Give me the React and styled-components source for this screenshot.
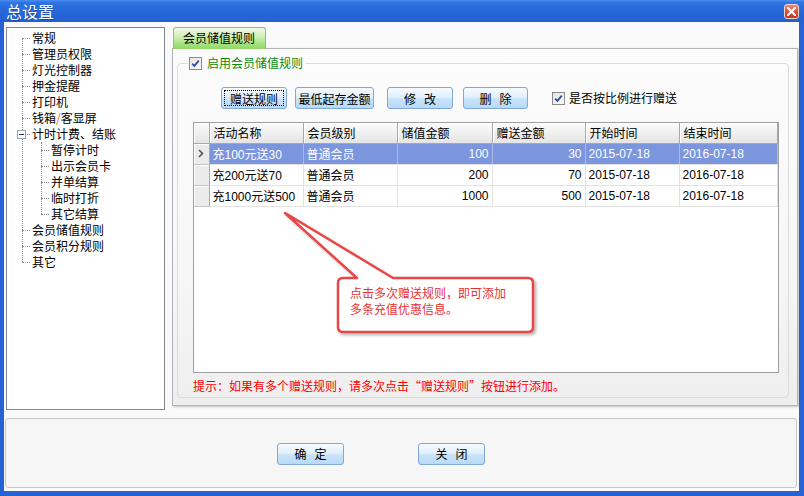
import React from 'react';
import styled, { createGlobalStyle } from 'styled-components';

const GlobalStyle = createGlobalStyle`
  html, body { margin: 0; padding: 0; }
  body {
    width: 804px; height: 496px; overflow: hidden; background: #fff;
    font-family: "Noto Sans CJK SC", "Liberation Sans", sans-serif;
    font-size: 12px; color: #000;
  }
`;

const Frame = styled.div`
  width: 804px; height: 496px;
  display: flex; flex-direction: column;
`;

const TitleBar = styled.div`
  height: 22px; flex: none;
  display: flex; align-items: center; justify-content: space-between;
  padding: 0 5px 0 6px; box-sizing: border-box;
  background: linear-gradient(#4b8ff2 0%, #2e73e2 12%, #2566d8 60%, #225fd2 100%);
`;

const Title = styled.div`
  color: #fff; font-size: 16px; line-height: 20px;
  text-shadow: 1px 1px 0 rgba(0, 0, 0, 0.25);
`;

const CloseBtn = styled.div`
  width: 15px; height: 15px; box-sizing: border-box;
  border: 1px solid #f4d4cc; border-radius: 3px;
  background: linear-gradient(#f08a74, #d8482e 60%, #c43a22);
  display: flex; align-items: center; justify-content: center;
`;

const Client = styled.div`
  flex: 1; display: flex; flex-direction: column; gap: 8px;
  padding: 5px 2px 3px 2px;
  border-style: solid; border-color: #2462d6;
  border-width: 0 5px 5px 4px;
  background: #fafafa;
`;

const Main = styled.div`
  height: 383px; display: flex; gap: 7px;
`;

const Tree = styled.div`
  width: 159px; flex: none; box-sizing: border-box;
  border: 1px solid #828790; background: #fff;
  padding-top: 2px;
`;

const TreeList = styled.ul`
  list-style: none; margin: 0; padding: 0; position: relative;
  &::before {
    content: ''; position: absolute;
    left: ${p => p.$line}px; top: ${p => p.$top}px; bottom: 8px;
    border-left: 1px dotted #8a8a8a;
  }
`;

const Row = styled.div`
  position: relative; height: 16px; line-height: 16px;
  padding-left: ${p => p.$pad}px; white-space: nowrap;
  &::before {
    content: ''; position: absolute;
    left: ${p => p.$line}px; top: 8px; width: 8px;
    border-top: 1px dotted #8a8a8a;
  }
`;

const Expander = styled.span`
  position: absolute; left: 10px; top: 4px;
  width: 9px; height: 9px; box-sizing: border-box;
  border: 1px solid #98a6b8; background: #fff; z-index: 1;
  &::after {
    content: ''; position: absolute; left: 1px; top: 3px; width: 5px;
    border-top: 1px solid #203050;
  }
`;

const Slash = styled.span`
  color: #d06a10;
`;

const TabArea = styled.div`
  flex: 1; display: flex; flex-direction: column;
`;

const TabStrip = styled.div`
  height: 21px; flex: none; padding-left: 1px; display: flex;
  position: relative; z-index: 1;
`;

const Tab = styled.div`
  width: 93px; height: 22px; box-sizing: border-box;
  border: 1px solid #98b88a; border-bottom: none; border-radius: 3px 3px 0 0;
  background: linear-gradient(#f2fbe9 0%, #d0f0b8 40%, #a2e07a 80%, #92d868 100%);
  padding-left: 9px; line-height: 20px;
`;

const TabPanel = styled.div`
  flex: 1; margin-bottom: 4px; box-sizing: border-box;
  border: 1px solid #b4b4b4;
  box-shadow: 1px 1px 2px rgba(0, 0, 0, 0.22);
  background: linear-gradient(#fcfcfc, #f7f7f7 60%, #eeeeee);
  padding: 6px 8px 7px 4px;
  display: flex; flex-direction: column;
`;

const Group = styled.fieldset`
  flex: 1; margin: 0; min-width: 0;
  border: 1px solid #d8dce0; border-radius: 4px;
  padding: 0 9px 0 15px;
  display: flex; flex-direction: column;
`;

const Legend = styled.legend`
  margin-left: -5px; padding: 0 3px 0 1px;
  height: 16px; line-height: 16px;
  display: flex; align-items: center; gap: 5px;
  color: #0c8a0c;
`;

const Check = styled.span`
  width: 13px; height: 13px; box-sizing: border-box; flex: none;
  border: 1px solid #8c8c8c;
  background: linear-gradient(135deg, #e4e4e0, #fafafa);
  display: inline-flex; align-items: center; justify-content: center;
`;

const ButtonRow = styled.div`
  margin: 16px 0 0 28px; height: 22px;
  display: flex; align-items: center;
`;

const Btn = styled.button`
  width: ${p => p.$w}px; height: 22px; flex: none;
  margin-right: ${p => p.$gap || 0}px;
  box-sizing: border-box; padding: 0;
  border: 1px solid #80a8d8; border-radius: 3px;
  background: linear-gradient(#f6fbff 0%, #e2f0fc 45%, #c8e3f9 55%, #b8daf7 100%);
  font: 12px "Noto Sans CJK SC", "Liberation Sans", sans-serif; color: #000;
  letter-spacing: ${p => (p.$spaced ? '8px' : '0')};
  text-indent: ${p => (p.$spaced ? '8px' : '0')};
  outline: ${p => (p.$focus ? '1px dotted #000' : 'none')};
  outline-offset: -4px;
`;

const RatioCheck = styled.label`
  display: flex; align-items: center; gap: 4px; line-height: 16px;
`;

const TableWrap = styled.div`
  position: relative; margin-top: 13px; height: 251px; box-sizing: border-box;
  border: 1px solid #a0a0a0; background: #fff;
`;

const Grid = styled.table`
  border-collapse: collapse; table-layout: fixed; width: 583px;
  font-family: "Liberation Sans", "Noto Sans CJK SC", sans-serif; font-size: 12px;
`;

const Th = styled.th`
  height: 20px; padding: 0 0 0 4px; box-sizing: border-box;
  font-weight: normal; text-align: left; white-space: nowrap;
  font-family: "Noto Sans CJK SC", sans-serif;
  background: linear-gradient(#fbfbfb, #f0f0f0 50%, #e4e4e4);
  border-right: 1px solid #a8a8a8; border-bottom: 1px solid #a8a8a8;
  box-shadow: inset 1px 1px 0 #fff;
`;

const Td = styled.td`
  height: 21px; padding: 0 3px; box-sizing: border-box;
  white-space: nowrap; overflow: hidden;
  text-align: ${p => (p.$num ? 'right' : 'left')};
  border-right: 1px solid ${p => (p.$sel ? '#a8bbe8' : '#e2e2e2')};
  border-bottom: 1px solid #e2e2e2;
  background: ${p => (p.$sel ? '#7b96dd' : '#fff')};
  color: ${p => (p.$sel ? '#fff' : '#000')};
`;

const RowHead = styled.td`
  height: 21px; padding: 0; box-sizing: border-box;
  background: #ebebeb;
  border-right: 1px solid #a8a8a8; border-bottom: 1px solid #c4c4c4;
  box-shadow: inset 1px 1px 0 #fff;
  text-align: center; vertical-align: middle;
`;

const CalloutShape = styled.svg`
  position: absolute; left: 89px; top: 88px; overflow: visible;
`;

const CalloutText = styled.div`
  position: absolute; left: 156px; top: 162px; width: 180px;
  line-height: 16px; color: #e63232;
`;

const Hint = styled.div`
  margin-top: 5px; line-height: 16px; color: #ff0000;
  font-family: "Noto Sans CJK SC", sans-serif;
`;

const Footer = styled.div`
  height: 70px; flex: none; box-sizing: border-box; margin-left: -1px;
  border: 1px solid #c8c8c8; border-radius: 3px; background: #f6f6f6;
  display: flex; align-items: center; gap: 74px;
  padding: 1px 0 0 271px;
`;

const tree = ['常规', '管理员权限', '灯光控制器', '押金提醒', '打印机'];
const subTree = ['暂停计时', '出示会员卡', '并单结算', '临时打折', '其它结算'];
const tail = ['会员储值规则', '会员积分规则', '其它'];

const rows = [
  ['充100元送30', '普通会员', '100', '30', '2015-07-18', '2016-07-18'],
  ['充200元送70', '普通会员', '200', '70', '2015-07-18', '2016-07-18'],
  ['充1000元送500', '普通会员', '1000', '500', '2015-07-18', '2016-07-18'],
];

const CheckMark = () => (
  <svg width="9" height="9" viewBox="0 0 9 9">
    <path d="M1.2 4.6 L3.4 6.8 L7.8 1.6" fill="none" stroke="#2d4f9e" strokeWidth="1.8" />
  </svg>
);

export default function App() {
  return (
    <Frame>
      <GlobalStyle />
      <TitleBar>
        <Title>总设置</Title>
        <CloseBtn>
          <svg width="9" height="9" viewBox="0 0 9 9">
            <path d="M1 1 L8 8 M8 1 L1 8" stroke="#fff" strokeWidth="2.2" strokeLinecap="square" />
          </svg>
        </CloseBtn>
      </TitleBar>
      <Client>
        <Main>
          <Tree>
            <TreeList $line={15} $top={8}>
              {tree.map(t => (
                <li key={t}><Row $pad={25} $line={15}>{t}</Row></li>
              ))}
              <li><Row $pad={25} $line={15}>钱箱<Slash>/</Slash>客显屏</Row></li>
              <li>
                <Row $pad={25} $line={15}><Expander />计时计费、结账</Row>
                <TreeList $line={34} $top={0}>
                  {subTree.map(t => (
                    <li key={t}><Row $pad={44} $line={34}>{t}</Row></li>
                  ))}
                </TreeList>
              </li>
              {tail.map(t => (
                <li key={t}><Row $pad={25} $line={15}>{t}</Row></li>
              ))}
            </TreeList>
          </Tree>
          <TabArea>
            <TabStrip><Tab>会员储值规则</Tab></TabStrip>
            <TabPanel>
              <Group>
                <Legend><Check><CheckMark /></Check>启用会员储值规则</Legend>
                <ButtonRow>
                  <Btn $w={66} $gap={8} $focus>赠送规则</Btn>
                  <Btn $w={79} $gap={13}>最低起存金额</Btn>
                  <Btn $w={66} $gap={10} $spaced>修改</Btn>
                  <Btn $w={65} $gap={24} $spaced>删除</Btn>
                  <RatioCheck><Check><CheckMark /></Check>是否按比例进行赠送</RatioCheck>
                </ButtonRow>
                <TableWrap>
                  <Grid>
                    <colgroup>
                      <col style={{ width: 15 }} />
                      <col style={{ width: 94 }} />
                      <col style={{ width: 94 }} />
                      <col style={{ width: 95 }} />
                      <col style={{ width: 93 }} />
                      <col style={{ width: 94 }} />
                      <col style={{ width: 98 }} />
                    </colgroup>
                    <thead>
                      <tr>
                        <Th />
                        <Th>活动名称</Th>
                        <Th>会员级别</Th>
                        <Th>储值金额</Th>
                        <Th>赠送金额</Th>
                        <Th>开始时间</Th>
                        <Th>结束时间</Th>
                      </tr>
                    </thead>
                    <tbody>
                      {rows.map((r, i) => {
                        const sel = i === 0;
                        return (
                          <tr key={r[0]}>
                            <RowHead>
                              {sel && (
                                <svg width="6" height="9" viewBox="0 0 6 9">
                                  <path d="M1 1 L4.5 4.5 L1 8" fill="none" stroke="#555" strokeWidth="1.6" />
                                </svg>
                              )}
                            </RowHead>
                            <Td $sel={sel}>{r[0]}</Td>
                            <Td $sel={sel}>{r[1]}</Td>
                            <Td $sel={sel} $num>{r[2]}</Td>
                            <Td $sel={sel} $num>{r[3]}</Td>
                            <Td $sel={sel}>{r[4]}</Td>
                            <Td $sel={sel}>{r[5]}</Td>
                          </tr>
                        );
                      })}
                    </tbody>
                  </Grid>
                  <CalloutShape width="254" height="125" viewBox="0 0 254 125">
                    <defs>
                      <filter id="shadow" x="-10%" y="-10%" width="130%" height="130%">
                        <feDropShadow dx="2" dy="2" stdDeviation="1.5" floodColor="#000" floodOpacity="0.3" />
                      </filter>
                    </defs>
                    <path
                      d="M60 67 L74 67 L2 2 L110 67 L245 67 Q250 67 250 72 L250 116 Q250 121 245 121 L60 121 Q55 121 55 116 L55 72 Q55 67 60 67 Z"
                      fill="#fff" stroke="#e84646" strokeWidth="2.5" strokeLinejoin="round" filter="url(#shadow)"
                    />
                  </CalloutShape>
                  <CalloutText>点击多次赠送规则，即可添加<br />多条充值优惠信息。</CalloutText>
                </TableWrap>
                <Hint>提示：如果有多个赠送规则，请多次点击“赠送规则”按钮进行添加。</Hint>
              </Group>
            </TabPanel>
          </TabArea>
        </Main>
        <Footer>
          <Btn $w={67} $spaced>确定</Btn>
          <Btn $w={67} $spaced>关闭</Btn>
        </Footer>
      </Client>
    </Frame>
  );
}
